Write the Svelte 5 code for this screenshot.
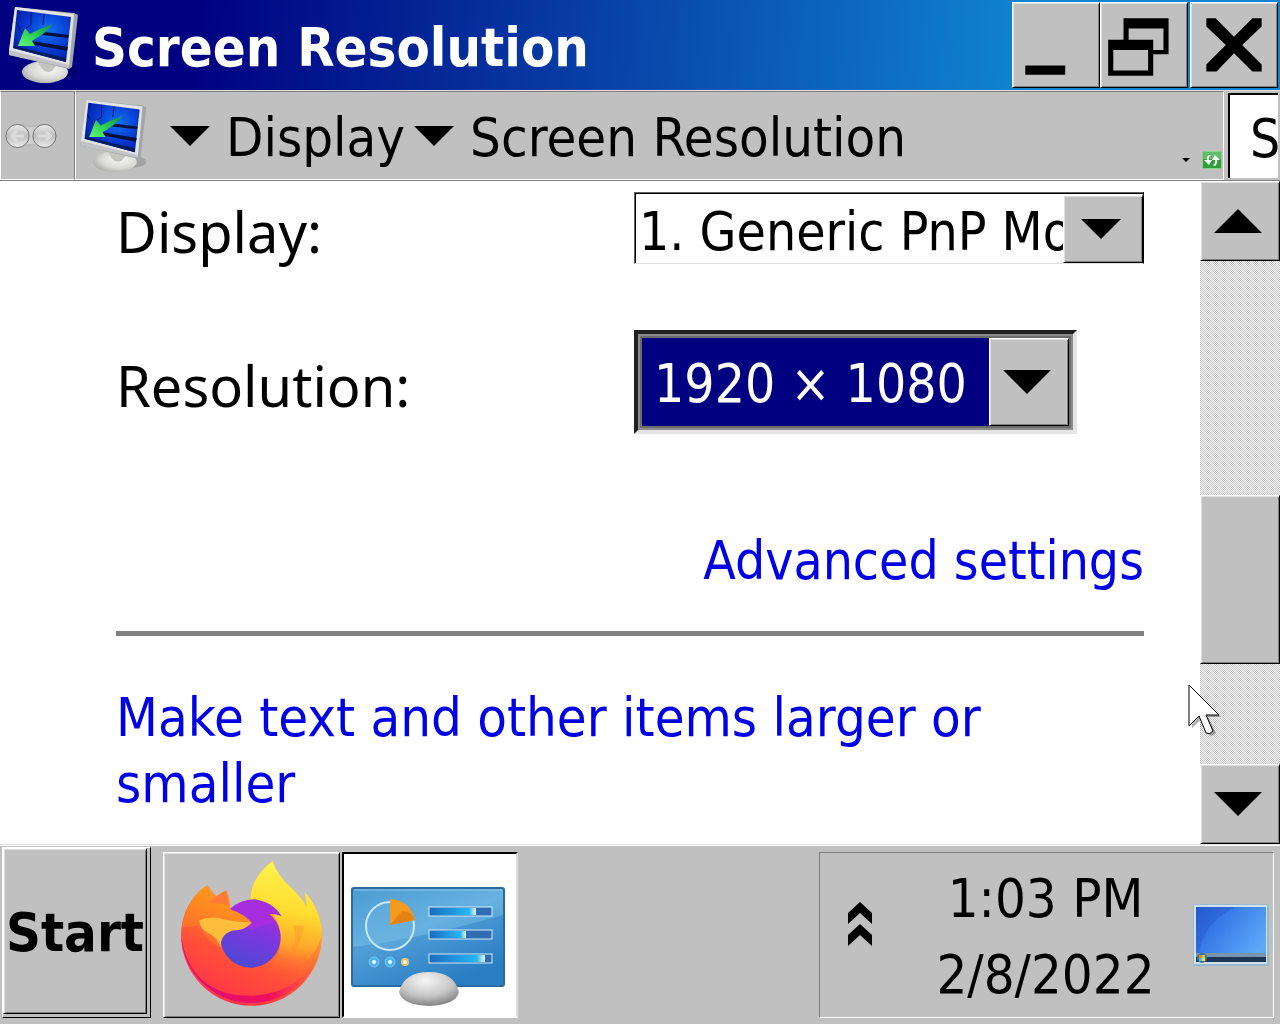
<script>
    let display = '1. Generic PnP Monitor';
    let resolution = '1920 × 1080';
    let search = 'S';

    const displays = ['1. Generic PnP Monitor'];
    const resolutions = ['1920 × 1080'];
    const crumbs = ['Display', 'Screen Resolution'];
    const sliders = [
        { y: 54, fill: 46 },
        { y: 77, fill: 36 },
        { y: 101, fill: 55 }
    ];
</script>

{#snippet monitor()}
    <svg class="monitor" viewBox="0 0 72 80" aria-hidden="true">
        <defs>
            <radialGradient id="mon-screen" cx="0.6" cy="0.4" r="0.7">
                <stop offset="0" stop-color="#1272f4" />
                <stop offset="0.6" stop-color="#0636cc" />
                <stop offset="1" stop-color="#051a9c" />
            </radialGradient>
            <linearGradient id="mon-arrow" x1="1" y1="0" x2="0" y2="1">
                <stop offset="0" stop-color="#128a4c" />
                <stop offset="0.5" stop-color="#2ccc50" />
                <stop offset="1" stop-color="#62fa74" />
            </linearGradient>
            <radialGradient id="mon-foot" cx="0.6" cy="0.4" r="0.7">
                <stop offset="0" stop-color="#f8f8f6" />
                <stop offset="0.6" stop-color="#d8d8d4" />
                <stop offset="1" stop-color="#a4a4a2" />
            </radialGradient>
        </defs>
        <ellipse cx="50" cy="67" rx="20" ry="7" fill="#000" opacity="0.15" />
        <ellipse cx="37" cy="67" rx="23" ry="11" fill="url(#mon-foot)" />
        <path d="M28 54 L49 60 L44 66 Q38 69 34 64z" fill="#c4c4c0" />
        <path d="M7 2 L66 8 L70 10 L64 62 L61 64 L1 50 L1 45z" fill="#a4a5a8" />
        <path d="M7 2 L66 9 L61 62 L1 46z" fill="#e3e4e7" />
        <path d="M1 45 L61 60 L61 63 L1 50z" fill="#c2c3c6" />
        <path d="M9 5 L63 12 L58 57 L5 43z" fill="url(#mon-screen)" />
        <path d="M23 7 L23 20 L15 25 M36 9 L35 20 M8 17 L14 28" stroke="#06127a" stroke-width="1" fill="none" />
        <path d="M37 27 L61 30 L60 33 L34 30z M24 36 L60 42 L59 46 L22 39z" fill="#04113e" />
        <path d="M6 41 L58 53 L58 57 L5 43z" fill="#071c5c" />
        <path d="M45 19 Q31 24 22 29 L17 23 L10 41 L27 41 L24 36 Q38 28 45 19z" fill="url(#mon-arrow)" />
    </svg>
{/snippet}

{#snippet arrow(up)}
    <svg class="arrow" viewBox="0 0 48 24" aria-hidden="true">
        <path d={up ? 'M0 24 L24 0 L48 24z' : 'M0 0 L48 0 L24 24z'} />
    </svg>
{/snippet}

<div class="window">
    <header class="titlebar">
        {@render monitor()}
        <h1>Screen Resolution</h1>
        <div class="window-buttons">
            <button class="raised" aria-label="Minimize">
                <svg viewBox="0 0 84 84"><path d="M12 61h39v9H12z" /></svg>
            </button>
            <button class="raised" aria-label="Restore">
                <svg viewBox="0 0 84 84">
                    <path fill-rule="evenodd" d="M22 15h44v35H51v-4h10V25H27v11h-5z M7 36h44v35H7z M12 46v20h34V46z" />
                </svg>
            </button>
            <button class="raised close" aria-label="Close">
                <svg viewBox="0 0 84 84">
                    <path d="M15 15h9l18 18 18-18h9v8L50 41l19 19v7H60L42 49 25 67H15v-7l19-19-19-18z" />
                </svg>
            </button>
        </div>
    </header>

    <nav class="toolbar">
        <div class="travel">
            <svg viewBox="0 0 56 28" aria-hidden="true">
                <defs>
                    <linearGradient id="orb" x1="0" y1="0" x2="0" y2="1">
                        <stop offset="0" stop-color="#ececec" />
                        <stop offset="0.5" stop-color="#bebebe" />
                        <stop offset="1" stop-color="#ececec" />
                    </linearGradient>
                </defs>
                <path d="M14 2 Q28 6 42 2 L42 26 Q28 20 14 26z" fill="#cecece" stroke="#b0b0b0" />
                <circle cx="14" cy="14" r="12" fill="url(#orb)" stroke="#707070" stroke-width="1" />
                <circle cx="42" cy="14" r="12" fill="url(#orb)" stroke="#707070" stroke-width="1" />
                <path d="M21 14H8m5-5-5 5 5 5 M35 14h13m-5-5 5 5-5 5" stroke="#dcdcdc" stroke-width="3" fill="none" />
            </svg>
        </div>
        <div class="address">
            {@render monitor()}
            {#each crumbs as crumb}
                {@render arrow(false)}
                <a href="#top">{crumb}</a>
            {/each}
            <div class="address-tools">
                <svg class="tiny-arrow" viewBox="0 0 8 4" aria-hidden="true"><path d="M0 0h8L4 4z" /></svg>
                <svg class="refresh" viewBox="0 0 20 18" aria-hidden="true">
                    <rect x="0.5" y="0.5" width="19" height="17" rx="1" fill="#2f9e3a" stroke="#8fcf94" />
                    <path d="M1 1h18v7H1z" fill="#62bd68" />
                    <path d="M7 4Q4 6 5 9H2l5 5 3-5H7Q6 6 9 4z M13 15Q16 12 15 9h3l-5-5-3 5h3Q14 12 11 14z" fill="#fff" />
                </svg>
            </div>
        </div>
        <input class="search" type="text" aria-label="Search" bind:value={search} />
    </nav>

    <div class="body">
        <main>
            <div class="fields">
                <label for="display">Display:</label>
                <div class="combo">
                    <select id="display" bind:value={display}>
                        {#each displays as item}
                            <option>{item}</option>
                        {/each}
                    </select>
                    <span class="drop raised">{@render arrow(false)}</span>
                </div>

                <label for="resolution">Resolution:</label>
                <div class="combo focused">
                    <select id="resolution" bind:value={resolution}>
                        {#each resolutions as item}
                            <option>{item}</option>
                        {/each}
                    </select>
                    <span class="drop raised">{@render arrow(false)}</span>
                </div>
            </div>
            <a class="advanced" href="#advanced">Advanced settings</a>
            <hr />
            <a class="larger" href="#text-size">Make text and other items larger or smaller</a>
        </main>

        <div class="scrollbar">
            <button class="raised" aria-label="Scroll up">{@render arrow(true)}</button>
            <div class="track">
                <div class="thumb raised"></div>
            </div>
            <button class="raised" aria-label="Scroll down">{@render arrow(false)}</button>
        </div>

        <svg class="cursor" viewBox="0 0 34 54" aria-hidden="true">
            <path d="M4 4 L4 44 L14 35 L21 51 Q25 53 28 49 L20 33 L33 33z" fill="#000" opacity="0.3" />
            <path d="M1 1 L1 42 L11 32 L18 49 Q22 51 25 47 L18 31 L31 31z" fill="#fff" stroke="#000" stroke-width="1" />
        </svg>
    </div>

    <footer class="taskbar">
        <button class="start"><span class="raised">Start</span></button>
        <button class="task raised" aria-label="Firefox">
            <svg viewBox="0 0 174 164">
                <defs>
                    <linearGradient id="fx-body" x1="0.8" y1="0.1" x2="0.4" y2="1">
                        <stop offset="0" stop-color="#ffd83c" />
                        <stop offset="0.4" stop-color="#ff8a2c" />
                        <stop offset="0.7" stop-color="#ff5038" />
                        <stop offset="1" stop-color="#ff3648" />
                    </linearGradient>
                    <linearGradient id="fx-rim" x1="0" y1="0" x2="1" y2="0">
                        <stop offset="0" stop-color="#d8107c" />
                        <stop offset="0.65" stop-color="#f00e5c" />
                        <stop offset="1" stop-color="#ff5a50" stop-opacity="0.4" />
                    </linearGradient>
                    <linearGradient id="fx-tail" x1="0.5" y1="0" x2="0.4" y2="1">
                        <stop offset="0" stop-color="#fff44f" />
                        <stop offset="0.45" stop-color="#ffdc30" />
                        <stop offset="0.75" stop-color="#ffa62a" />
                        <stop offset="1" stop-color="#ff6030" stop-opacity="0" />
                    </linearGradient>
                    <linearGradient id="fx-globe" x1="0.7" y1="0" x2="0.3" y2="1">
                        <stop offset="0" stop-color="#a82ce0" />
                        <stop offset="0.45" stop-color="#7a38dc" />
                        <stop offset="1" stop-color="#4a4ad4" />
                    </linearGradient>
                    <linearGradient id="fx-head" x1="0.2" y1="1" x2="0.6" y2="0.2">
                        <stop offset="0" stop-color="#ff6430" />
                        <stop offset="1" stop-color="#ff961c" />
                    </linearGradient>
                </defs>
                <path d="M108 8 Q86 25 86 46 L64 58 L43 32 Q17 50 17 82 A70 70 0 0 0 157 82 Q157 58 140 39 L142 54 Q136 43 126 34 Q112 22 108 8z" fill="url(#fx-body)" />
                <path d="M17 82 Q26 142 86 142 Q130 141 152 105 A70 70 0 0 1 17 82z" fill="url(#fx-rim)" />
                <path d="M108 8 Q86 25 86 46 Q115 56 116 84 Q116 108 98 118 Q146 122 157 82 Q157 58 140 39 L142 54 Q136 43 126 34 Q112 22 108 8z" fill="url(#fx-tail)" />
                <path d="M139 72 Q137 92 124 100 Q134 86 128 72z" fill="#ff8a2c" opacity="0.35" />
                <circle cx="86" cy="84" r="30" fill="url(#fx-globe)" />
                <path d="M65 56 Q76 46 90 46 Q109 49 117 63 Q110 60 102 61 Q108 65 110 68 L86 76z" fill="#a42ee0" />
                <path d="M43 32 Q23 44 18 74 L36 72 Q44 90 57 94 Q55 82 62 77 Q82 76 87 69 Q80 61 66 56 Q66 45 62 37 Q52 42 46 49 Q46 39 43 32z" fill="url(#fx-head)" />
                <path d="M35 67 Q46 62 60 66 Q76 69 87 69 Q81 77 68 77 Q56 81 56 94 Q54 84 43 79 Q36 75 35 67z" fill="#ffbd3d" />
                <path d="M62 37 Q52 42 46 49 L65 52z" fill="#ff7a38" />
            </svg>
        </button>
        <button class="task pressed" aria-label="Control Panel">
            <svg viewBox="0 0 172 162">
                <defs>
                    <linearGradient id="cp-panel" x1="0" y1="0" x2="0.6" y2="1">
                        <stop offset="0" stop-color="#4b9bd2" />
                        <stop offset="0.5" stop-color="#68b2e2" />
                        <stop offset="1" stop-color="#2f85c8" />
                    </linearGradient>
                    <linearGradient id="cp-bar">
                        <stop offset="0" stop-color="#166dc0" />
                        <stop offset="0.85" stop-color="#27b6f8" />
                        <stop offset="1" stop-color="#e8fbff" />
                    </linearGradient>
                    <radialGradient id="cp-foot" cx="0.45" cy="0.25" r="0.75">
                        <stop offset="0" stop-color="#f6f6f6" />
                        <stop offset="0.6" stop-color="#c6c6c6" />
                        <stop offset="1" stop-color="#848484" />
                    </radialGradient>
                </defs>
                <rect x="8" y="34" width="152" height="98" rx="2" fill="url(#cp-panel)" stroke="#2b6c9f" stroke-width="2" />
                <path d="M9 93 Q80 84 159 61 V131 H9z" fill="#1b6ebb" opacity="0.3" />
                <path d="M10 36h148" stroke="#8fc5e6" stroke-width="1" />
                <circle cx="46" cy="72" r="24" fill="#6db3df" fill-opacity="0.4" stroke="#c6e8fa" stroke-width="2" />
                <path d="M46 45 Q66 46 71 66 L46 71z" fill="#f39a1f" />
                <path d="M46 71 L58 57 Q68 57 71 66z" fill="#e48312" />
                {#each sliders as s}
                    <rect x="85" y={s.y - 1} width="63" height="9" fill="#2f6cb2" stroke="#d4edfb" stroke-width="1" />
                    <rect x="86" y={s.y} width={s.fill} height="7" fill="url(#cp-bar)" />
                {/each}
                <circle cx="30" cy="108" r="5" fill="#4fb2ea" stroke="#78c5ed" />
                <circle cx="30" cy="108" r="2" fill="#e6fbff" />
                <circle cx="46" cy="108" r="5" fill="#4fb2ea" stroke="#78c5ed" />
                <circle cx="46" cy="108" r="2" fill="#e6fbff" />
                <circle cx="61" cy="108" r="4" fill="#e4c877" />
                <circle cx="61" cy="108" r="2" fill="#fffbe0" />
                <path d="M55 138 Q60 118 85 118 Q110 118 115 138 Q112 151 85 152 Q58 151 55 138z" fill="url(#cp-foot)" />
            </svg>
        </button>
        <div class="tray">
            <button class="chevrons" aria-label="Show hidden icons">
                <svg viewBox="0 0 24 44">
                    <path d="M0 11 12 0 24 11V22L12 11 0 22z M0 33 12 22 24 33V44L12 33 0 44z" />
                </svg>
            </button>
            <div class="clock">
                <time datetime="13:03">1:03 PM</time>
                <time datetime="2022-02-08">2/8/2022</time>
            </div>
            <button class="desktop" aria-label="Show desktop">
                <svg viewBox="0 0 76 62">
                    <defs>
                        <linearGradient id="desk" x1="0" y1="0" x2="1" y2="0.6">
                            <stop offset="0" stop-color="#2860d4" />
                            <stop offset="0.4" stop-color="#397be8" />
                            <stop offset="1" stop-color="#5fa8f8" />
                        </linearGradient>
                    </defs>
                    <rect width="76" height="62" rx="2" fill="#98b8cc" />
                    <rect x="1" y="1" width="73" height="59" fill="#cfe2ee" />
                    <rect x="3" y="3" width="70" height="55" fill="url(#desk)" />
                    <path d="M3 3h40Q10 18 6 50H3z" fill="#2150c4" opacity="0.35" />
                    <path d="M3 50h70v8H3z" fill="#1c3658" />
                    <path d="M3 49h70v4H3z" fill="#7a94b0" />
                    <circle cx="9" cy="54" r="5" fill="#3d7388" />
                    <path d="M6 51h3v3H6z" fill="#e2853c" />
                    <path d="M9 51h3v3H9z" fill="#a9d84d" />
                    <path d="M6 54h3v3H6z" fill="#5cb4f0" />
                    <path d="M9 54h3v3H9z" fill="#f4e04c" />
                </svg>
            </button>
        </div>
    </footer>
</div>

<style>
    :global(body) {
        margin: 0;
        background: #c0c0c0;
    }

    .window {
        min-height: 100vh;
        display: flex;
        flex-direction: column;
        overflow: hidden;
        font-family: "DejaVu Sans Condensed", Tahoma, sans-serif;
        font-size: 53px;
        line-height: 66px;
        color: #000;
    }

    button, select, input {
        box-sizing: border-box;
        margin: 0;
        padding: 0;
        border: 0;
        border-radius: 0;
        font: inherit;
        color: inherit;
        background: #c0c0c0;
    }

    button svg {
        display: block;
    }

    a {
        color: #0000e6;
        text-decoration: none;
    }

    .raised {
        box-sizing: border-box;
        background: #c0c0c0;
        border: 1px solid;
        border-color: #fff #000 #000 #fff;
        box-shadow: inset 1px 1px #dfdfdf, inset -1px -1px #808080;
    }

    .monitor {
        flex: none;
        width: 72px;
        height: 80px;
    }

    .titlebar {
        display: flex;
        align-items: center;
        height: 90px;
        padding: 0 2px 0 8px;
        background: linear-gradient(95deg, #000080 15%, #1084d0 80%);
    }

    h1 {
        flex: 1;
        margin: 0;
        padding: 6px 0 0 12px;
        font-size: 54px;
        font-weight: bold;
        color: #fff;
        white-space: nowrap;
    }

    .window-buttons {
        display: flex;
    }

    .window-buttons button {
        width: 88px;
        height: 86px;
    }

    .window-buttons .close {
        margin-left: 2px;
    }

    .toolbar {
        box-sizing: border-box;
        display: flex;
        height: 91px;
        padding-right: 2px;
        background: #c0c0c0;
        border-top: 1px solid #dfdfdf;
        border-bottom: 1px solid #808080;
    }

    .travel {
        box-sizing: border-box;
        width: 75px;
        display: flex;
        align-items: center;
        padding-left: 3px;
        border: 1px solid;
        border-color: #808080 #808080 #fff #fff;
    }

    .travel svg {
        width: 54px;
        height: 28px;
    }

    .address {
        flex: 1;
        display: flex;
        align-items: center;
        padding-left: 2px;
        border: 1px solid;
        border-color: #808080 #fff #fff #fff;
        font-size: 54px;
        white-space: nowrap;
    }

    .address .monitor {
        height: 76px;
        margin-right: 20px;
    }

    .address a {
        color: #000;
        padding: 4px 9px 0 16px;
    }

    .address-tools {
        flex: 1;
        align-self: flex-end;
        display: flex;
        align-items: center;
        justify-content: flex-end;
        gap: 12px;
        padding: 0 1px 10px 0;
    }

    .tiny-arrow {
        width: 8px;
        height: 4px;
    }

    .refresh {
        width: 20px;
        height: 18px;
    }

    .search {
        width: 50px;
        margin: 2px 0 2px 4px;
        padding: 4px 0 0 20px;
        background: #fff;
        border: solid #000;
        border-width: 2px 0 0 2px;
        outline: 0;
    }

    .arrow {
        display: block;
        flex: none;
        width: 40px;
        height: 20px;
    }

    .body {
        position: relative;
        flex: 1;
        display: flex;
        background: #fff;
    }

    main {
        flex: 1;
        display: flex;
        flex-direction: column;
        padding: 11px 56px 22px 116px;
    }

    .fields {
        display: grid;
        grid-template-columns: 1fr 1fr;
        column-gap: 8px;
        row-gap: 66px;
        align-items: center;
    }

    label {
        font-family: "Noto Sans", "Segoe UI", sans-serif;
        font-size: 56px;
        padding-top: 6px;
    }

    .combo {
        box-sizing: border-box;
        display: flex;
        height: 72px;
        min-width: 0;
        background: #fff;
        border: 1px solid;
        border-color: #606060 #000 #dfdfdf #606060;
        box-shadow: inset 1px 1px #000;
        padding: 2px 0 0 2px;
    }

    .combo select {
        flex: 1;
        min-width: 0;
        appearance: none;
        padding: 4px 0 0 2px;
        background: #fff;
        overflow: hidden;
        outline: 0;
    }

    .drop {
        flex: none;
        width: 80px;
        display: flex;
        align-items: center;
        justify-content: center;
        padding-right: 4px;
        pointer-events: none;
    }

    .focused {
        justify-self: start;
        height: 104px;
        padding: 4px;
        background: #6c6c6c;
        border: solid;
        border-width: 4px;
        border-color: #202020 #e4e4e4 #e4e4e4 #202020;
        box-shadow: inset 0 0 0 2px #8c8c8c;
    }

    .focused select {
        padding: 4px 22px 0 12px;
        color: #fff;
        background: #000080;
    }

    .focused .arrow {
        width: 48px;
        height: 24px;
    }

    .advanced {
        align-self: flex-end;
        margin-top: 94px;
    }

    hr {
        width: 100%;
        height: 5px;
        margin: 37px 0 49px;
        border: 0;
        background: #808080;
    }

    .larger {
        font-size: 54px;
    }

    .scrollbar {
        width: 80px;
        display: flex;
        flex-direction: column;
    }

    .scrollbar button {
        display: flex;
        align-items: center;
        justify-content: center;
        height: 80px;
        padding-right: 4px;
    }

    .scrollbar .arrow {
        width: 48px;
        height: 24px;
    }

    .track {
        flex: 1;
        display: flex;
        flex-direction: column;
        background: repeating-conic-gradient(#c0c0c0 0 25%, #fff 0 50%) 0 0 / 2px 2px;
    }

    .track::before {
        content: "";
        flex: 235;
    }

    .track::after {
        content: "";
        flex: 100;
    }

    .thumb {
        flex: 168;
    }

    .cursor {
        position: absolute;
        right: 58px;
        top: 503px;
        width: 34px;
        height: 54px;
    }

    .taskbar {
        box-sizing: border-box;
        display: flex;
        height: 180px;
        padding: 2px 6px 6px 2px;
        background: #c0c0c0;
        border-top: 1px solid #dfdfdf;
        box-shadow: inset 0 1px #fff;
        font-size: 54px;
    }

    .start {
        width: 149px;
        padding: 0 3px 3px 0;
        border: 1px solid;
        border-color: #fff #000 #000 #fff;
        font-weight: bold;
    }

    .start span {
        display: flex;
        align-items: center;
        justify-content: center;
        height: 100%;
        padding-top: 4px;
    }

    .task {
        width: 177px;
        margin: 5px 0 0 12px;
    }

    .task svg {
        width: 100%;
    }

    .pressed {
        width: 176px;
        margin-left: 2px;
        background: #fff;
        border: 2px solid;
        border-color: #000 #dfdfdf #fff #000;
    }

    .tray {
        box-sizing: border-box;
        width: 455px;
        margin: 5px 0 0 auto;
        display: flex;
        align-items: center;
        padding: 0 4px 0 28px;
        border: 1px solid;
        border-color: #808080 #fff #fff #808080;
    }

    .chevrons svg {
        width: 24px;
        height: 44px;
    }

    .chevrons {
        padding-bottom: 22px;
    }

    .clock {
        flex: 1;
        display: flex;
        flex-direction: column;
        align-items: center;
        gap: 10px;
        padding: 4px 0 0 26px;
    }

    .desktop svg {
        width: 76px;
        height: 62px;
    }
</style>
